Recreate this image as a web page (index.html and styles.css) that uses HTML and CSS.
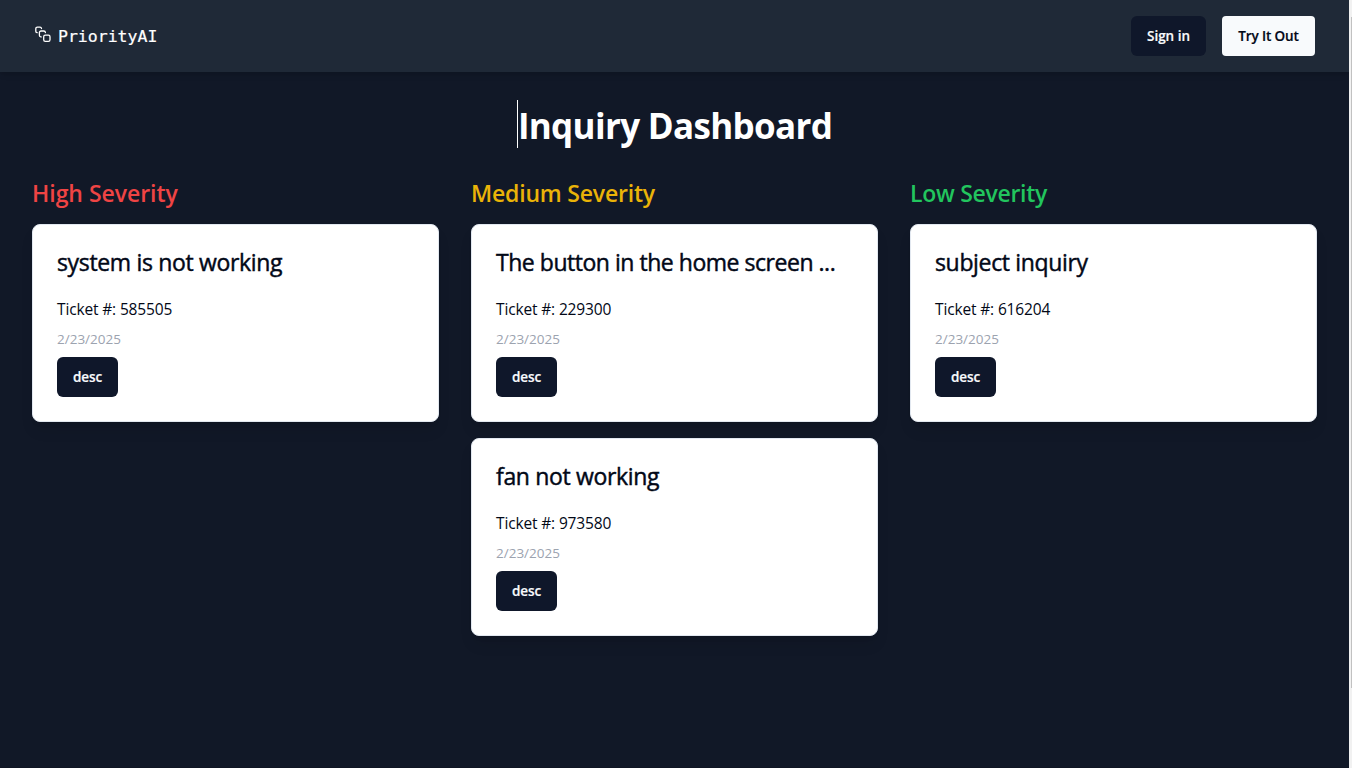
FILE: index.html
```html
<!DOCTYPE html>
<html lang="en">
<head>
<meta charset="utf-8">
<title>PriorityAI</title>
<link rel="stylesheet" href="styles.css">
</head>
<body>
<div class="page">
  <header class="navbar">
    <a class="brand">
      <svg class="logo" width="18" height="18" viewBox="0 0 18 18" fill="none" stroke="currentColor" stroke-width="1.3" stroke-linejoin="round" stroke-linecap="round">
        <path d="M3.2 6.7H3A1.4 1.4 0 0 1 1.8 5.3V2.7A1.6 1.6 0 0 1 3.4 1.1H6A1.6 1.6 0 0 1 7.5 2.5"/>
        <path d="M7.2 10.9H6.8A1.6 1.6 0 0 1 5.4 9.3V6.6A1.6 1.6 0 0 1 7 5H9.8A1.6 1.6 0 0 1 11.4 6.5"/>
        <rect x="9.7" y="9.1" width="6.3" height="6.3" rx="1.6"/>
      </svg>
      <span class="brand-name">PriorityAI</span>
    </a>
    <nav class="actions">
      <button class="btn btn-dark signin">Sign in</button>
      <button class="btn btn-light">Try It Out</button>
    </nav>
  </header>
  <main class="main">
    <h1 class="title">Inquiry Dashboard</h1>
    <div class="columns">
      <section class="column">
        <h2 class="severity high">High Severity</h2>
        <article class="card">
          <h3 class="subject">system is not working</h3>
          <p class="ticket">Ticket #: 585505</p>
          <p class="date">2/23/2025</p>
          <button class="btn btn-dark">desc</button>
        </article>
      </section>
      <section class="column">
        <h2 class="severity medium">Medium Severity</h2>
        <article class="card">
          <h3 class="subject subject-long">The button in the home screen ...</h3>
          <p class="ticket">Ticket #: 229300</p>
          <p class="date">2/23/2025</p>
          <button class="btn btn-dark">desc</button>
        </article>
        <article class="card">
          <h3 class="subject">fan not working</h3>
          <p class="ticket">Ticket #: 973580</p>
          <p class="date">2/23/2025</p>
          <button class="btn btn-dark">desc</button>
        </article>
      </section>
      <section class="column">
        <h2 class="severity low">Low Severity</h2>
        <article class="card">
          <h3 class="subject">subject inquiry</h3>
          <p class="ticket">Ticket #: 616204</p>
          <p class="date">2/23/2025</p>
          <button class="btn btn-dark">desc</button>
        </article>
      </section>
    </div>
  </main>
</div>
<div class="scrollbar"><div class="thumb"></div></div>
</body>
</html>
```
FILE: styles.css
```css
* { box-sizing: border-box; margin: 0; padding: 0; }
body {
  display: flex;
  height: 768px;
  overflow: hidden;
  background: #111827;
  font-family: "Open Sans", "Noto Sans", sans-serif;
  color: #020817;
}
.page { flex: 1; display: flex; flex-direction: column; border-bottom: 1px solid #0f1523; }
.navbar {
  display: flex;
  align-items: center;
  justify-content: space-between;
  height: 72px;
  padding: 0 34px;
  background: #1f2937;
  box-shadow: 0 4px 6px -1px rgba(0, 0, 0, .1), 0 2px 4px -2px rgba(0, 0, 0, .1);
}
.brand { display: flex; align-items: center; gap: 6px; color: #fff; }
.logo { margin-top: -3px; }
.brand-name { padding-top: 2px; font: 16.5px/28px "DejaVu Sans Mono", monospace; -webkit-text-stroke: .2px currentColor; }
.actions { display: flex; gap: 16px; }
.btn {
  display: flex;
  align-items: center;
  justify-content: center;
  width: 61px;
  height: 40px;
  border: 0;
  border-radius: 6px;
  font: 600 13.5px/20px "Open Sans", sans-serif;
  letter-spacing: -.1px;
  -webkit-text-stroke: .2px currentColor;
}
.btn-dark { background: #0f172a; color: #f8fafc; }
.btn-light { width: 93px; border-radius: 4px; background: #f8fafc; color: #020817; }
.signin { width: 75px; letter-spacing: 0; }
.main { padding: 28px 32px; }
.title {
  width: max-content;
  height: 48px;
  margin: 0 auto 28px;
  border-left: 1px solid #fff;
  color: #fff;
  font-size: 35px;
  line-height: 52px;
  font-weight: 700;
  letter-spacing: -.68px;
}
.columns { display: grid; grid-template-columns: repeat(3, 1fr); gap: 32px; }
.column { display: flex; flex-direction: column; gap: 16px; }
.severity { height: 32px; font-size: 23px; line-height: 35px; font-weight: 600; letter-spacing: -.2px; }
.high { color: #ef4444; letter-spacing: -.03px; }
.medium { color: #eab308; }
.low { color: #22c55e; letter-spacing: -.28px; }
.card {
  height: 198px;
  padding: 24px;
  border: 1px solid #e2e8f0;
  border-radius: 8px;
  background: #fff;
  box-shadow: 0 10px 15px -3px rgba(0, 0, 0, .1), 0 4px 6px -4px rgba(0, 0, 0, .1);
}
.subject {
  height: 24px;
  margin-bottom: 24px;
  font-size: 23px;
  line-height: 27px;
  font-weight: 400;
  letter-spacing: -.34px;
  white-space: nowrap;
  -webkit-text-stroke: .45px currentColor;
}
.subject-long { letter-spacing: -.47px; }
.ticket { height: 24px; font-size: 15.5px; line-height: 25px; letter-spacing: -.15px; }
.date { height: 20px; margin: 8px 0; color: #9ca3af; font-size: 13.5px; line-height: 21px; }
.scrollbar { width: 3px; padding: 17px 0 0 2px; background: #f1f1f1; }
.thumb { height: 671px; background: #c1c1c1; }
```
